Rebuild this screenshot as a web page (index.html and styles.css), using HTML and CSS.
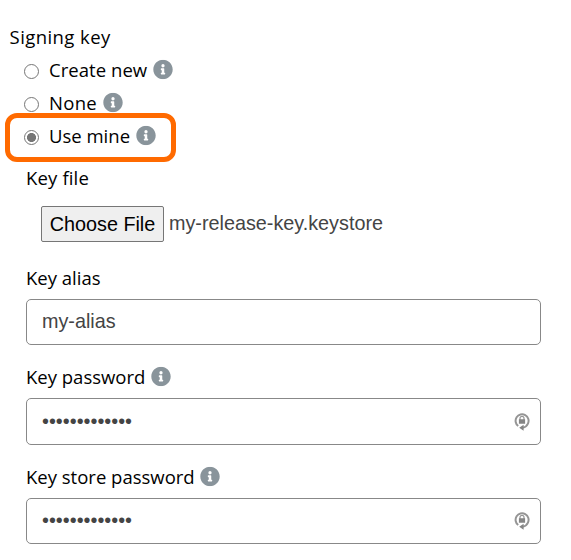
FILE: index.html
```html
<!DOCTYPE html>
<html lang="en">
<head>
<meta charset="utf-8">
<title>Signing key</title>
<link rel="stylesheet" href="styles.css">
</head>
<body>
<svg width="0" height="0" class="defs" aria-hidden="true">
  <symbol id="info" viewBox="0 0 512 512"><path fill="#89949b" d="M256 8C119 8 8 119 8 256s111 248 248 248 248-111 248-248S393 8 256 8zm0 110a42 42 0 1 1 0 84 42 42 0 0 1 0-84zm56 254c0 7-5 12-12 12h-88c-7 0-12-5-12-12v-24c0-7 5-12 12-12h12v-64h-12c-7 0-12-5-12-12v-24c0-7 5-12 12-12h64c7 0 12 5 12 12v100h12c7 0 12 5 12 12z"/></symbol>
  <symbol id="lock" viewBox="0 0 16 20"><g fill="none" stroke="#959595"><path stroke-width="2" d="M4.2 14A6.5 6.5 0 1 1 14 11.5Q12.8 14.8 8.5 15.8"/><path stroke-width="1.2" d="M6 8V6.3a2 2 0 0 1 4 0V8"/></g><path fill="#858585" d="M4.9 7.3h6.2v4.5H4.9zM9.6 12.8v6L5.2 15.8z"/></symbol>
</svg>
<form class="form">
  <div class="legend"><span class="t-signing">Signing key</span></div>
  <div class="option"><span class="radio"></span><span class="t-create">Create new</span><svg class="info"><use href="#info"/></svg></div>
  <div class="option"><span class="radio"></span><span class="t-none">None</span><svg class="info"><use href="#info"/></svg></div>
  <div class="option selected"><span class="radio checked"></span><span class="t-mine">Use mine</span><svg class="info"><use href="#info"/></svg></div>
  <div class="fields">
    <div class="label"><span class="t-file">Key file</span></div>
    <div class="file"><button type="button">Choose File</button><span class="filename">my-release-key.keystore</span></div>
    <div class="label"><span class="t-alias">Key alias</span></div>
    <div class="input alias">my-alias</div>
    <div class="label"><span class="t-pass">Key password</span><svg class="info"><use href="#info"/></svg></div>
    <div class="input pass"><span class="dots">•••••••••••••</span><svg class="lock"><use href="#lock"/></svg></div>
    <div class="label"><span class="t-store">Key store password</span><svg class="info"><use href="#info"/></svg></div>
    <div class="input store"><span class="dots">•••••••••••••</span><svg class="lock"><use href="#lock"/></svg></div>
  </div>
</form>
</body>
</html>
```
FILE: styles.css
```css
*, *::after { box-sizing: border-box; }
body { margin: 0; background: #fff; color: #000; font: 18.5px/33px "Open Sans", "Noto Sans", sans-serif; overflow: hidden; }
.defs { position: absolute; }
.form { padding: 20px 30px 0 9px; }
.legend, .option, .label { display: flex; align-items: center; height: 33px; white-space: nowrap; }
.legend { padding-left: .6px; }
.t-signing { letter-spacing: .42px; }
.t-create { letter-spacing: .05px; }
.t-none { letter-spacing: .3px; }
.t-file { letter-spacing: .15px; }
.option { position: relative; padding-left: 15px; }
.radio { width: 15px; height: 15px; margin: 3px 10px 0 0; border: 1px solid #767676; border-radius: 50%; flex: none; }
.radio.checked { background: radial-gradient(circle, #767676 4.2px, transparent 4.8px); }
.info { width: 20px; height: 20px; margin: -1px 0 0 5.7px; flex: none; transform: translateY(.5px); }
.selected::after { content: ""; position: absolute; left: -4px; top: -6px; width: 171px; height: 49px; border: 5px solid #ff6a00; border-radius: 12px; }
.fields { padding: 9px 0 0 17px; }
.file { display: flex; align-items: center; height: 36px; margin: 12px 0 19px 15px; font: 19.8px/23px "Liberation Sans", Arial, sans-serif; }
.file button { width: 123px; height: 36px; padding: 0; border: 1px solid #767676; border-radius: 2px; background: #efefef; color: #000; font: inherit; white-space: nowrap; }
.filename { margin: -2px 0 0 5px; color: #444; }
.input { display: flex; align-items: center; justify-content: space-between; width: 515px; height: 46px; padding: 0 10px 0 15px; border: 1px solid #888; border-radius: 5px; color: #444; font: 19.8px/23px "Liberation Sans", Arial, sans-serif; }
.dots { margin-top: -1px; }
.alias { margin: 5px 0 15px; padding-bottom: 2px; }
.pass { height: 47px; margin: 5px 0 15px; }
.store { margin-top: 5px; }
.lock { width: 16px; height: 20px; }
```
